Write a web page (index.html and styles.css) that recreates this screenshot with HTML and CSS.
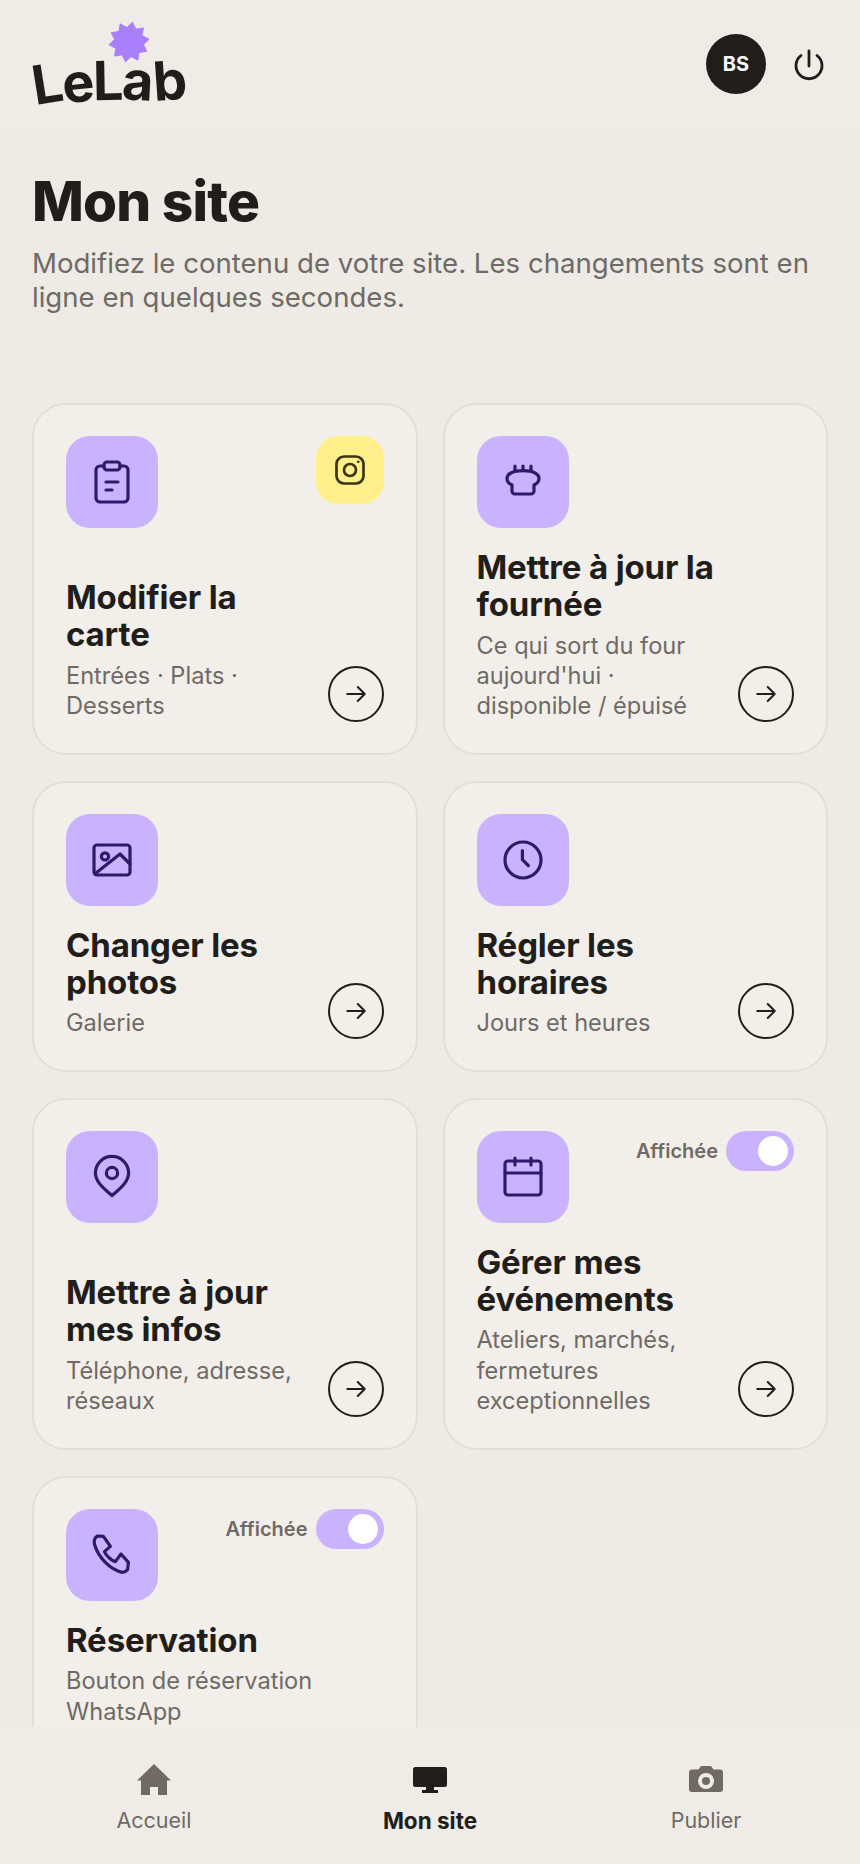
FILE: index.html
```html
<!DOCTYPE html>
<html lang="fr">

<head>
  <meta charset="UTF-8" />
  <meta name="viewport" content="width=device-width, initial-scale=1.0" />
  <title>LeLab - Mon site</title>
  <link rel="stylesheet" href="styles.css">
</head>

<body>
  <div class="app">
    <header class="topbar">
      <div class="logo">
        <svg class="logo-star" viewBox="0 0 40 40">
          <polygon fill="#a97ffc" stroke="#a97ffc" stroke-width="1" stroke-linejoin="round" points="23.3,1.3 26.5,7.9 33.7,6.8 32.3,13.9 38.8,17.4 33.5,22.4 36.8,28.9 29.6,30 28.3,37.1 21.9,33.6 16.7,38.7 13.5,32.1 6.3,33.2 7.7,26.1 1.2,22.6 6.5,17.6 3.2,11.1 10.4,10.1 11.7,2.9 18.1,6.4" />
        </svg>
        <div class="logo-text"><span class="l1">L</span><span class="l2">e</span><span class="l3">L</span><span class="l4">a</span><span class="l5">b</span></div>
      </div>
      <div class="topbar-right">
        <div class="avatar">BS</div>
        <svg class="power" viewBox="0 0 36 36" fill="none" stroke="#211d1b" stroke-width="2.8" stroke-linecap="round">
          <path d="M18 5v15" />
          <path d="M10 9.5a13 13 0 1 0 16 0" />
        </svg>
      </div>
    </header>

    <main class="content">
      <h1>Mon site</h1>
      <p class="intro">Modifiez le contenu de votre site. Les changements sont en ligne en quelques secondes.</p>

      <div class="cards">
        <div class="card">
          <div class="card-top">
            <div class="tile">
              <svg viewBox="0 0 24 24"><rect x="8" y="2" width="8" height="4" rx="1.5" /><path d="M16 4h2a2 2 0 0 1 2 2v14a2 2 0 0 1-2 2H6a2 2 0 0 1-2-2V6a2 2 0 0 1 2-2h2" /><path d="M9 12h6M9 16h3" /></svg>
            </div>
            <div class="tile-small">
              <svg viewBox="0 0 24 24"><rect x="3" y="3" width="18" height="18" rx="5" /><circle cx="12" cy="12" r="4" /><path d="M17.5 6.5h.01" /></svg>
            </div>
          </div>
          <div class="card-bottom">
            <div class="card-text">
              <h2>Modifier la carte</h2>
              <p>Entrées · Plats · Desserts</p>
            </div>
            <div class="go"><svg viewBox="0 0 24 24"><path d="M4.5 12h15M13.5 6l6 6-6 6" /></svg></div>
          </div>
        </div>

        <div class="card">
          <div class="card-top">
            <div class="tile">
              <svg viewBox="0 0 24 24"><path d="M6.5 13.5C4.8 12.7 4 11.5 4 10.2 4 7.8 7.2 6.3 12 6.3s8 1.5 8 3.9c0 1.300-.8 2.500-2.500 3.300v3a1.500 1.500 0 0 1-1.500 1.500H8a1.500 1.500 0 0 1-1.500-1.500z" /><path d="M8 6.3V4M12 6.3V4M16 6.3V4" /></svg>
            </div>
          </div>
          <div class="card-bottom">
            <div class="card-text">
              <h2>Mettre à jour la fournée</h2>
              <p>Ce qui sort du four aujourd'hui · disponible / épuisé</p>
            </div>
            <div class="go"><svg viewBox="0 0 24 24"><path d="M4.5 12h15M13.5 6l6 6-6 6" /></svg></div>
          </div>
        </div>

        <div class="card">
          <div class="card-top">
            <div class="tile">
              <svg viewBox="0 0 24 24"><rect x="3" y="4.5" width="18" height="15" rx="1.5" /><circle cx="8.5" cy="10.2" r="1.8" /><path d="M4 18.5 16 9l5 5" /></svg>
            </div>
          </div>
          <div class="card-bottom">
            <div class="card-text">
              <h2>Changer les photos</h2>
              <p>Galerie</p>
            </div>
            <div class="go"><svg viewBox="0 0 24 24"><path d="M4.5 12h15M13.5 6l6 6-6 6" /></svg></div>
          </div>
        </div>

        <div class="card">
          <div class="card-top">
            <div class="tile">
              <svg viewBox="0 0 24 24"><circle cx="12" cy="12" r="9" /><path d="M11.7 7.3v4.5l3 3" /></svg>
            </div>
          </div>
          <div class="card-bottom">
            <div class="card-text">
              <h2>Régler les horaires</h2>
              <p>Jours et heures</p>
            </div>
            <div class="go"><svg viewBox="0 0 24 24"><path d="M4.5 12h15M13.5 6l6 6-6 6" /></svg></div>
          </div>
        </div>

        <div class="card">
          <div class="card-top">
            <div class="tile">
              <svg viewBox="0 0 24 24"><path d="M20.3 10c0 5-5.6 8.8-8.3 11.3C9.3 18.8 3.7 15 3.700 10a8.300 8.300 0 0 1 16.600 0z" /><circle cx="12" cy="10" r="2.8" /></svg>
            </div>
          </div>
          <div class="card-bottom">
            <div class="card-text">
              <h2>Mettre à jour mes infos</h2>
              <p>Téléphone, adresse, réseaux</p>
            </div>
            <div class="go"><svg viewBox="0 0 24 24"><path d="M4.5 12h15M13.5 6l6 6-6 6" /></svg></div>
          </div>
        </div>

        <div class="card">
          <div class="card-top">
            <div class="tile">
              <svg viewBox="0 0 24 24"><rect x="3" y="4" width="18" height="17" rx="1.5" /><path d="M3 10h18M8 2.5V6M16 2.5V6" /></svg>
            </div>
            <div class="shown">
              <span>Affichée</span>
              <div class="switch"><div class="knob"></div></div>
            </div>
          </div>
          <div class="card-bottom">
            <div class="card-text">
              <h2>Gérer mes événements</h2>
              <p>Ateliers, marchés, fermetures exceptionnelles</p>
            </div>
            <div class="go"><svg viewBox="0 0 24 24"><path d="M4.5 12h15M13.5 6l6 6-6 6" /></svg></div>
          </div>
        </div>

        <div class="card">
          <div class="card-top">
            <div class="tile">
              <svg viewBox="0 0 24 24"><path d="M3.2 6.5C2.9 5 3.2 3.4 4.8 2.5L7.7 2.7 11.2 7.7 8.2 10.3C8.900 12 11.500 14.800 13.700 15.300L16.500 11.500 20.200 15.700 19.800 19.300C19 20.200 18.200 20.700 17.300 20.700 11 19.500 5 13 3.200 6.500Z" /></svg>
            </div>
            <div class="shown">
              <span>Affichée</span>
              <div class="switch"><div class="knob"></div></div>
            </div>
          </div>
          <div class="card-bottom">
            <div class="card-text">
              <h2>Réservation</h2>
              <p>Bouton de réservation WhatsApp</p>
            </div>
          </div>
        </div>
      </div>
    </main>

    <nav class="tabbar">
      <div class="tab">
        <svg viewBox="0 0 36 32"><path d="M18 0 35 16.5H31V31H22V23H14V31H5V16.5H1z" /></svg>
        <span>Accueil</span>
      </div>
      <div class="tab active">
        <svg viewBox="0 0 36 32"><path d="M3.5 3h29A2.5 2.5 0 0 1 35 5.5v15a2.5 2.5 0 0 1-2.5 2.5H22v3h4v3H10v-3h4v-3H3.5A2.5 2.5 0 0 1 1 20.5v-15A2.5 2.5 0 0 1 3.5 3z" /></svg>
        <span>Mon site</span>
      </div>
      <div class="tab">
        <svg viewBox="0 0 36 32" fill-rule="evenodd"><path d="M13 2h10l2.5 3.500H32a3 3 0 0 1 3 3V25a3 3 0 0 1-3 3H4a3 3 0 0 1-3-3V8.500a3 3 0 0 1 3-3h6.500zM18 9a8 8 0 1 0 0 16 8 8 0 0 0 0-16zm0 4a4 4 0 1 1 0 8 4 4 0 0 1 0-8z" /></svg>
        <span>Publier</span>
      </div>
    </nav>
  </div>
</body>

</html>
```

FILE: styles.css
```css
:root {
  --bg: #eeebe6;
  --card-bg: #f2efea;
  --card-border: #e2ded8;
  --ink: #211d1b;
  --muted: #6f6a65;
  --purple: #c9b3ff;
  --purple-ink: #2d1a6b;
  --yellow: #fff08c;
}

* {
  box-sizing: border-box;
}

body {
  margin: 0;
  font-family: Inter, 'Noto Sans', sans-serif;
  background-color: var(--bg);
  color: var(--ink);
}

.app {
  display: flex;
  flex-direction: column;
  height: 1864px;
  overflow: hidden;
}

.topbar {
  flex: none;
  display: flex;
  justify-content: space-between;
  height: 128px;
  padding: 0 33px;
  background: #efece7;
}

.logo {
  position: relative;
  width: 160px;
}

.logo-star {
  position: absolute;
  left: 75px;
  top: 21px;
  width: 42px;
  height: 42px;
}

.logo-text {
  position: absolute;
  left: -1px;
  top: 53px;
  font-size: 54px;
  font-weight: 700;
  line-height: 62px;
  letter-spacing: -1px;
  white-space: nowrap;
}

.logo-text span {
  display: inline-block;
}

.l1 {
  transform: rotate(-9deg);
}

.l2 {
  transform: rotate(-6deg) translateY(-1px);
}

.l3 {
  transform: rotate(-1deg) translateY(-3px);
}

.l4 {
  transform: rotate(3deg) translateY(-3px);
}

.l5 {
  transform: rotate(-4deg) translateY(-3px);
}

.topbar-right {
  display: flex;
  align-items: center;
  gap: 25px;
  height: 128px;
}

.avatar {
  display: flex;
  align-items: center;
  justify-content: center;
  width: 60px;
  height: 60px;
  border-radius: 50%;
  background: var(--ink);
  color: #fff;
  font-size: 20px;
  font-weight: 700;
}

.power {
  width: 36px;
  height: 36px;
}

.content {
  flex: 1;
  min-height: 0;
  overflow: hidden;
  padding: 0 32px;
}

h1 {
  margin: 40px 0 0;
  font-size: 55px;
  font-weight: 800;
  line-height: 66px;
  letter-spacing: -0.8px;
}

.intro {
  margin: 12px 0 0;
  font-size: 27.6px;
  line-height: 34px;
  color: var(--muted);
}

.cards {
  display: grid;
  grid-template-columns: 1fr 1fr;
  gap: 26px 25px;
  margin-top: 89px;
}

.card {
  display: flex;
  flex-direction: column;
  padding: 31px 32px;
  border: 2px solid var(--card-border);
  border-radius: 34px;
  background: var(--card-bg);
}

.card-top {
  display: flex;
  justify-content: space-between;
  align-items: flex-start;
}

.tile {
  display: flex;
  align-items: center;
  justify-content: center;
  width: 92px;
  height: 92px;
  border-radius: 24px;
  background: var(--purple);
}

.tile svg {
  width: 48px;
  height: 48px;
  fill: none;
  stroke: var(--purple-ink);
  stroke-width: 1.6;
  stroke-linecap: round;
  stroke-linejoin: round;
}

.tile-small {
  display: flex;
  align-items: center;
  justify-content: center;
  width: 68px;
  height: 68px;
  border-radius: 22px;
  background: var(--yellow);
}

.tile-small svg {
  width: 36px;
  height: 36px;
  fill: none;
  stroke: #3b3512;
  stroke-width: 1.8;
  stroke-linecap: round;
  stroke-linejoin: round;
}

.shown {
  display: flex;
  align-items: center;
  gap: 8px;
  font-size: 20px;
  font-weight: 600;
  color: var(--muted);
}

.switch {
  display: flex;
  justify-content: flex-end;
  align-items: center;
  width: 68px;
  height: 40px;
  padding-right: 6px;
  border-radius: 20px;
  background: var(--purple);
}

.knob {
  width: 30px;
  height: 30px;
  border-radius: 50%;
  background: #fff;
}

.card-bottom {
  display: flex;
  align-items: flex-end;
  gap: 8px;
  margin-top: auto;
  padding-top: 21px;
}

.card-text {
  flex: 1;
  min-width: 0;
}

h2 {
  margin: 0;
  font-size: 33px;
  font-weight: 700;
  line-height: 36.8px;
  letter-spacing: -0.15px;
}

.card-text p {
  margin: 8px 0 0;
  font-size: 23.6px;
  line-height: 30.4px;
  color: var(--muted);
}

.go {
  flex: none;
  display: flex;
  align-items: center;
  justify-content: center;
  width: 56px;
  height: 56px;
  border: 2px solid var(--ink);
  border-radius: 50%;
}

.go svg {
  width: 28px;
  height: 28px;
  fill: none;
  stroke: var(--ink);
  stroke-width: 1.7;
  stroke-linecap: round;
  stroke-linejoin: round;
}

.tabbar {
  flex: none;
  display: grid;
  grid-template-columns: repeat(3, 276px);
  justify-content: center;
  height: 137px;
  background: #efece7;
}

.tab {
  display: flex;
  flex-direction: column;
  align-items: center;
  gap: 11px;
  padding-top: 37px;
  font-size: 21.5px;
  color: var(--muted);
}

.tab svg {
  width: 36px;
  height: 32px;
  fill: currentColor;
}

.tab.active {
  color: var(--ink);
  font-size: 22.5px;
  font-weight: 700;
}
```
